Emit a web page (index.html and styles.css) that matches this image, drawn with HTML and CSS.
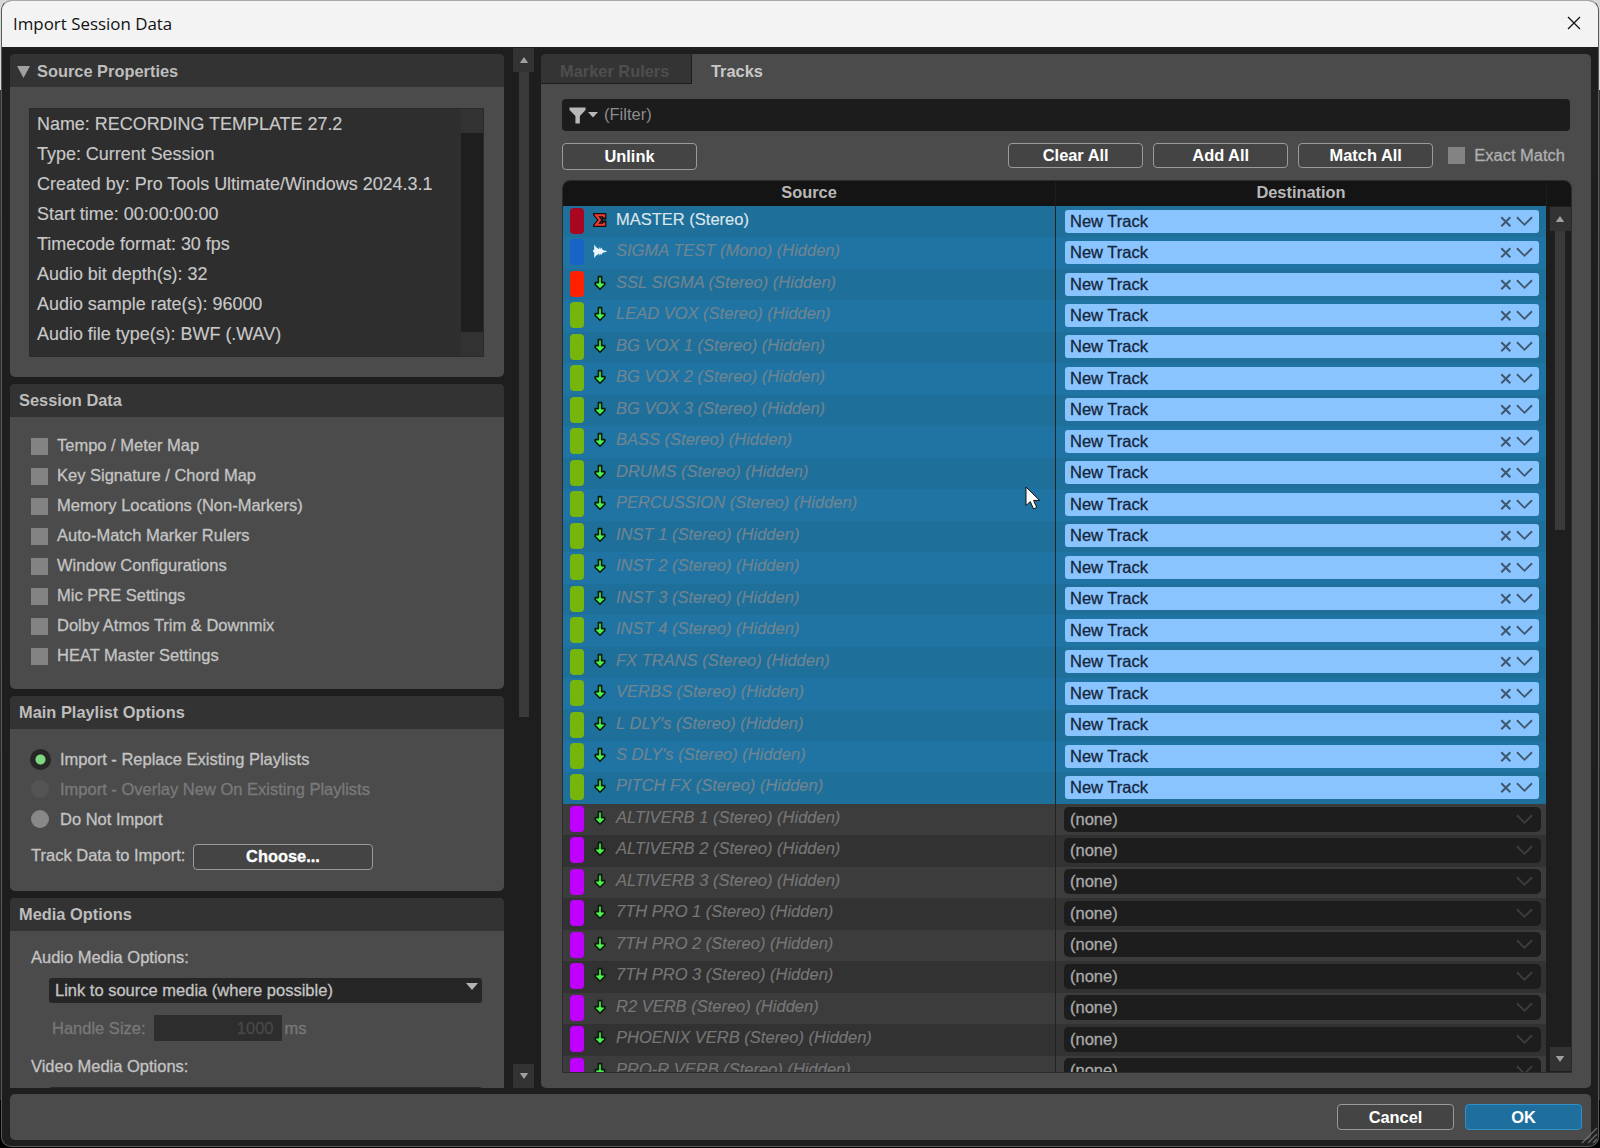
FILE: index.html
```html
<!DOCTYPE html>
<html lang="en">
<head>
  <meta charset="UTF-8" />
  <meta name="viewport" content="width=device-width, initial-scale=1.0"/>
  <title>Import Session Data</title>
  <link rel="stylesheet" href="styles.css">
</head>
<body>

  <!-- Shared icons -->
  <svg class="hidden">
    <symbol id="icon-arrow" viewBox="0 0 14 16">
      <path d="M5.4 1.6h3.2v6h3.2v1.9L7 14.2 2.2 9.5V7.6h3.2z" fill="#4df04d" stroke="#0b1a0b" stroke-width="1.6" stroke-linejoin="round"/>
    </symbol>
    <symbol id="icon-sigma" viewBox="0 0 14 16">
      <path d="M11.2 5.4V3.2H3L7 8l-4 4.8h8.2v-2.2" fill="none" stroke="#1a0b0b" stroke-width="4.4" stroke-linecap="square"/>
      <path d="M11.2 5.4V3.2H3L7 8l-4 4.8h8.2v-2.2" fill="none" stroke="#f03a30" stroke-width="2"/>
    </symbol>
    <symbol id="icon-wave" viewBox="0 0 14 16">
      <path d="M0 7.4l1.2-.8V1.6l2 2.6L5 5.4l1 .8.9-2.4.8 2.4 1-1.6.9 2.4 4.1 1v.8l-4.1 1-.9 2.2-1-1.6-.8 2.4-.9-2.2-1 .8-1.8 1.2-2 2.4V9.6L0 8.8z" fill="#e8f6fa"/>
    </symbol>
    <symbol id="icon-x" viewBox="0 0 12 12">
      <path d="M1.3 1.3l9 9M10.3 1.3l-9 9" fill="none" stroke="currentColor" stroke-width="2"/>
    </symbol>
    <symbol id="icon-chevron" viewBox="0 0 18 11">
      <path d="M1 1l8 8 8-8" fill="none" stroke="currentColor" stroke-width="1.9"/>
    </symbol>
    <symbol id="icon-up" viewBox="0 0 10 8">
      <path d="M5 1l4.2 6H.8z" fill="currentColor"/>
    </symbol>
    <symbol id="icon-down" viewBox="0 0 10 8">
      <path d="M.8 1h8.4L5 7z" fill="currentColor"/>
    </symbol>
  </svg>

  <div class="window">

    <div class="titlebar">
      <span class="title">Import Session Data</span>
      <svg class="close" viewBox="0 0 14 14"><path d="M1 1l12 12M13 1L1 13" fill="none" stroke="#111" stroke-width="1.3"/></svg>
    </div>

    <div class="content">

      <!-- Left side -->
      <div class="sidebar">

        <section class="panel source">
          <h2><svg class="disclosure" viewBox="0 0 13 12"><path d="M0 0h13L6.5 12z" fill="#a0a0a0"/></svg>Source Properties</h2>
          <div class="properties">
            <ul>
              <li>Name: RECORDING TEMPLATE 27.2</li>
              <li>Type: Current Session</li>
              <li>Created by: Pro Tools Ultimate/Windows 2024.3.1</li>
              <li>Start time: 00:00:00:00</li>
              <li>Timecode format: 30 fps</li>
              <li>Audio bit depth(s): 32</li>
              <li>Audio sample rate(s): 96000</li>
              <li>Audio file type(s): BWF (.WAV)</li>
            </ul>
            <div class="mini-scroll"><span></span><span></span></div>
          </div>
        </section>

        <section class="panel session">
          <h2>Session Data</h2>
          <div class="options">
            <label><i class="check"></i>Tempo / Meter Map</label>
            <label><i class="check"></i>Key Signature / Chord Map</label>
            <label><i class="check"></i>Memory Locations (Non-Markers)</label>
            <label><i class="check"></i>Auto-Match Marker Rulers</label>
            <label><i class="check"></i>Window Configurations</label>
            <label><i class="check"></i>Mic PRE Settings</label>
            <label><i class="check"></i>Dolby Atmos Trim &amp; Downmix</label>
            <label><i class="check"></i>HEAT Master Settings</label>
          </div>
        </section>

        <section class="panel playlist">
          <h2>Main Playlist Options</h2>
          <div class="options radios">
            <label><i class="radio selected"></i>Import - Replace Existing Playlists</label>
            <label class="disabled"><i class="radio"></i>Import - Overlay New On Existing Playlists</label>
            <label><i class="radio"></i>Do Not Import</label>
          </div>
          <div class="track-data">
            <span>Track Data to Import:</span>
            <button class="btn choose">Choose...</button>
          </div>
        </section>

        <section class="panel media">
          <h2>Media Options</h2>
          <div class="media-label">Audio Media Options:</div>
          <div class="select">
            <span>Link to source media (where possible)</span>
            <svg viewBox="0 0 12 7"><path d="M0 0h12L6 7z" fill="#b4b4b4"/></svg>
          </div>
          <div class="handle">
            <span>Handle Size:</span>
            <span class="handle-value">1000</span>
            <span>ms</span>
          </div>
          <div class="media-label">Video Media Options:</div>
          <div class="select"></div>
        </section>

      </div>

      <div class="scrollbar side-scroll">
        <span class="scroll-btn"><svg><use href="#icon-up"/></svg></span>
        <span class="thumb"></span>
        <span class="scroll-btn last"><svg><use href="#icon-down"/></svg></span>
      </div>

      <!-- Right side -->
      <div class="main">
        <div class="tabs">
          <div class="tab inactive">Marker Rulers</div>
          <div class="tab">Tracks</div>
        </div>

        <div class="filter">
          <svg class="funnel" viewBox="0 0 18 18"><path d="M.5.5h17v2.6l-6 6.4v8H6.8v-8L.5 3.1z" fill="#b8b8b8"/></svg>
          <svg class="funnel-arrow" viewBox="0 0 10 6"><path d="M0 0h10L5 5.6z" fill="#b8b8b8"/></svg>
          <span>(Filter)</span>
        </div>

        <div class="toolbar">
          <button class="btn unlink">Unlink</button>
          <button class="btn">Clear All</button>
          <button class="btn">Add All</button>
          <button class="btn">Match All</button>
          <label class="exact"><i class="check"></i><span>Exact Match</span></label>
        </div>

        <div class="table">
          <div class="table-head">
            <span>Source</span>
            <span>Destination</span>
          </div>
          <div class="table-body">
            <div class="rows" id="rows"></div>
            <div class="scrollbar table-scroll">
              <span class="scroll-btn"><svg><use href="#icon-up"/></svg></span>
              <span class="thumb"></span>
              <span class="scroll-btn last"><svg><use href="#icon-down"/></svg></span>
            </div>
          </div>
        </div>
      </div>
    </div>

    <div class="footer">
      <button class="btn">Cancel</button>
      <button class="btn ok">OK</button>
    </div>

    <svg class="grip" viewBox="0 0 18 18"><path d="M2 17L17 2M8 17l9-9M13 17l4-4" stroke="#6a6a6a" stroke-width="1.4"/></svg>
  </div>

  <svg class="cursor" viewBox="0 0 16 24"><path d="M1 1v18.6l4.3-4 3.2 7.3 3.2-1.5-3.1-7h6z" fill="#fff" stroke="#111" stroke-width="1"/></svg>

  <script>
    const tracks = [
      ["MASTER (Stereo)", "#a90620", "sigma"],
      ["SIGMA TEST (Mono) (Hidden)", "#1763c8", "wave"],
      ["SSL SIGMA (Stereo) (Hidden)", "#ff2000", "arrow"],
      ["LEAD VOX (Stereo) (Hidden)", "#76b50c", "arrow"],
      ["BG VOX 1 (Stereo) (Hidden)", "#76b50c", "arrow"],
      ["BG VOX 2 (Stereo) (Hidden)", "#76b50c", "arrow"],
      ["BG VOX 3 (Stereo) (Hidden)", "#76b50c", "arrow"],
      ["BASS (Stereo) (Hidden)", "#76b50c", "arrow"],
      ["DRUMS (Stereo) (Hidden)", "#76b50c", "arrow"],
      ["PERCUSSION (Stereo) (Hidden)", "#76b50c", "arrow"],
      ["INST 1 (Stereo) (Hidden)", "#76b50c", "arrow"],
      ["INST 2 (Stereo) (Hidden)", "#76b50c", "arrow"],
      ["INST 3 (Stereo) (Hidden)", "#76b50c", "arrow"],
      ["INST 4 (Stereo) (Hidden)", "#76b50c", "arrow"],
      ["FX TRANS (Stereo) (Hidden)", "#76b50c", "arrow"],
      ["VERBS (Stereo) (Hidden)", "#76b50c", "arrow"],
      ["L DLY's (Stereo) (Hidden)", "#76b50c", "arrow"],
      ["S DLY's (Stereo) (Hidden)", "#76b50c", "arrow"],
      ["PITCH FX (Stereo) (Hidden)", "#76b50c", "arrow"],
      ["ALTIVERB 1 (Stereo) (Hidden)", "#bf00ff", "arrow"],
      ["ALTIVERB 2 (Stereo) (Hidden)", "#bf00ff", "arrow"],
      ["ALTIVERB 3 (Stereo) (Hidden)", "#bf00ff", "arrow"],
      ["7TH PRO 1 (Stereo) (Hidden)", "#bf00ff", "arrow"],
      ["7TH PRO 2 (Stereo) (Hidden)", "#bf00ff", "arrow"],
      ["7TH PRO 3 (Stereo) (Hidden)", "#bf00ff", "arrow"],
      ["R2 VERB (Stereo) (Hidden)", "#bf00ff", "arrow"],
      ["PHOENIX VERB (Stereo) (Hidden)", "#bf00ff", "arrow"],
      ["PRO-R VERB (Stereo) (Hidden)", "#bf00ff", "arrow"]
    ];
    const selectedCount = 19;

    document.getElementById("rows").innerHTML = tracks.map(([name, color, icon], i) => {
      const selected = i < selectedCount;
      const hidden = name.includes("(Hidden)");
      return `
        <div class="row ${selected ? "selected" : ""}">
          <div class="cell-source">
            <span class="swatch" style="background:${color}"></span>
            <svg class="track-icon"><use href="#icon-${icon}"/></svg>
            <span class="track-name ${hidden ? "is-hidden" : ""}">${name}</span>
          </div>
          <div class="cell-dest">
            <div class="dest">
              <span>${selected ? "New Track" : "(none)"}</span>
              ${selected ? '<svg class="dest-x"><use href="#icon-x"/></svg>' : ""}
              <svg class="dest-chevron"><use href="#icon-chevron"/></svg>
            </div>
          </div>
        </div>`;
    }).join("");
  </script>

</body>
</html>
```
FILE: styles.css
```css
* {
  box-sizing: border-box;
}

body {
  margin: 0;
  height: 100vh;
  background: linear-gradient(#d8d8d8 0, #d8d8d8 90px, #333 90px, #222 1100px, #000 1100px);
  font-family: "Liberation Sans", Arial, sans-serif;
  font-size: 16.5px;
  line-height: 20px;
  color: #c4c4c4;
  overflow: hidden;
}

.hidden {
  display: none;
}

.window {
  position: relative;
  width: 1598px;
  height: 1147px;
  margin: 0 1px;
  display: flex;
  flex-direction: column;
  background: #1e1e1e;
  border: 1px solid #5a5a5a;
  border-top: 1px solid #a8a8a8;
  border-radius: 10px;
  overflow: hidden;
}

.titlebar {
  height: 46px;
  flex: none;
  display: flex;
  align-items: center;
  justify-content: space-between;
  padding: 0 17px 0 11px;
  background: #f3f3f3;
}

.title {
  font-family: "Open Sans", "Noto Sans", sans-serif;
  font-size: 16.9px;
  color: #111;
}

.close {
  width: 14px;
  height: 14px;
  margin-bottom: 2px;
}

.content {
  display: flex;
  height: 1041px;
  flex: none;
}

/* Left side */

.sidebar {
  width: 494px;
  margin: 7px 0 0 8px;
  display: flex;
  flex-direction: column;
  gap: 7px;
  overflow: hidden;
}

.panel {
  flex: none;
  background: #4b4b4b;
  border-radius: 5px;
  overflow: hidden;
  -webkit-text-stroke: 0.3px;
}

.panel h2 {
  margin: 0;
  height: 33px;
  padding: 5px 9px 7px;
  display: flex;
  align-items: center;
  background: #333;
  font-size: 16.4px;
  line-height: 20px;
  color: #bdbdbd;
  -webkit-text-stroke: 0;
}

.source {
  height: 323px;
}

.source h2 {
  padding: 6px 10px;
}

.panel .disclosure {
  width: 13px;
  height: 12px;
  margin: 2px 7px 0 -3px;
}

.properties {
  display: flex;
  justify-content: space-between;
  margin: 21px 20px 0 19px;
  height: 249px;
  background: #2e2e2e;
  border: 1px solid #2a2a2a;
}

.properties ul {
  margin: 0;
  padding: 0 0 0 7px;
  list-style: none;
  font-size: 17.95px;
  line-height: 30px;
  color: #c8c8c8;
  white-space: nowrap;
  -webkit-text-stroke: 0.15px;
}

.mini-scroll {
  width: 22px;
  display: flex;
  flex-direction: column;
  justify-content: space-between;
  background: #1e1e1e;
}

.mini-scroll span {
  height: 24px;
  background: #323232;
}

.session {
  height: 305px;
}

.options {
  padding: 15px 0 0 21px;
}

.session .options {
  padding-top: 13px;
}

.options label {
  display: flex;
  align-items: center;
  height: 30px;
}

.check {
  width: 17px;
  height: 17px;
  flex: none;
  margin-right: 9px;
  background: #838383;
}

.options .check {
  margin-top: 2px;
}

.playlist {
  height: 195px;
}

.radio {
  width: 18px;
  height: 18px;
  margin-right: 11px;
  border-radius: 50%;
  background: #888;
}

.radio.selected {
  width: 21px;
  height: 21px;
  margin: 0 9px 0 -1px;
  background: radial-gradient(circle, #7fd67f 4.5px, #262626 5.5px);
}

.disabled {
  color: #7a7a7a;
}

.disabled .radio {
  background: #545454;
}

.track-data {
  display: flex;
  align-items: center;
  padding-left: 21px;
  margin-top: 10px;
}

.track-data span {
  width: 162px;
  margin-bottom: 5px;
}

.btn {
  width: 135px;
  height: 25px;
  padding: 0 0 1px;
  background: #444;
  border: 1.5px solid #9a9a9a;
  border-radius: 4px;
  color: #fff;
  font-family: inherit;
  font-size: 16.4px;
  font-weight: bold;
  line-height: 20px;
}

.btn.choose {
  width: 180px;
  height: 26px;
  padding: 0 0 2px;
}

.media {
  height: 230px;
}

.media-label {
  padding: 16px 21px 0;
}

.select {
  display: flex;
  justify-content: space-between;
  height: 25px;
  margin: 11px 22px 0 39px;
  padding: 2px 4px 0 6px;
  background: #262626;
  border-radius: 3px;
}

.select svg {
  width: 12px;
  height: 7px;
  margin-top: 3px;
}

.handle {
  display: flex;
  align-items: center;
  margin: 12px 0 0 42px;
  color: #787878;
}

.handle-value {
  width: 128px;
  height: 26px;
  margin: 0 3px 0 8px;
  padding: 3px 8px;
  background: #2d2d2d;
  color: #484848;
  text-align: right;
}

.handle + .media-label {
  padding-top: 15px;
}

/* Scrollbars */

.scrollbar {
  display: flex;
  flex-direction: column;
  align-items: center;
  color: #a0a0a0;
}

.scroll-btn {
  width: 21px;
  height: 24px;
  display: flex;
  align-items: center;
  justify-content: center;
  background: #333;
}

.scroll-btn svg {
  width: 10px;
  height: 8px;
}

.scroll-btn.last {
  margin-top: auto;
}

.thumb {
  width: 10px;
  background: #3a3a3a;
}

.side-scroll {
  width: 21px;
  margin: 1px 7px 0 9px;
}

.side-scroll .thumb {
  height: 645px;
}

/* Right side */

.main {
  width: 1050px;
  margin-top: 7px;
  display: flex;
  flex-direction: column;
  background: #4b4b4b;
  border-radius: 5px;
  overflow: hidden;
}

.tabs {
  display: flex;
  height: 30px;
  flex: none;
}

.tab {
  padding: 7px 19px 0;
  font-size: 16.4px;
  font-weight: bold;
  line-height: 20px;
  color: #c8c8c8;
}

.tab.inactive {
  width: 151px;
  background: #343434;
  border-right: 1px solid #1c1c1c;
  border-bottom: 1px solid #1c1c1c;
  color: #4e4e4e;
}

.filter {
  display: flex;
  align-items: center;
  height: 32px;
  margin: 15px 21px 0;
  padding: 0 7px;
  background: #1c1c1c;
  border-radius: 4px;
  color: #8c8c8c;
}

.filter span {
  margin-bottom: 3px;
}

.funnel {
  width: 17px;
  height: 17px;
  margin-right: 2px;
}

.funnel-arrow {
  width: 10px;
  height: 6px;
  margin-right: 6px;
}

.toolbar {
  display: flex;
  gap: 10px;
  margin: 12px 26px 0 21px;
}

.btn.unlink {
  height: 27px;
  margin-right: auto;
  padding: 0 0 2px;
}

.exact {
  display: flex;
  align-items: center;
  height: 25px;
  margin-left: 5px;
  color: #b0b0b0;
  -webkit-text-stroke: 0.3px;
}

.exact span {
  margin-bottom: 2px;
}

.table {
  width: 1010px;
  height: 893px;
  margin: 10px 0 0 21px;
  border: 1px solid #2c2c2c;
  border-radius: 8px 8px 0 0;
  overflow: hidden;
}

.table-head {
  display: grid;
  grid-template-columns: 493px 491px;
  height: 25px;
  padding-top: 1px;
  background: #141414;
  font-size: 16.4px;
  font-weight: bold;
  text-align: center;
  color: #b8b8b8;
}

.table-head span {
  height: 24px;
  border-right: 1px solid #1e1e1e;
}

.table-body {
  display: flex;
  height: 866px;
  background: #1e1e1e;
}

.rows {
  width: 983px;
}

.row {
  display: grid;
  grid-template-columns: 493px 490px;
  height: 31.476px;
  background: #3c3c3c;
}

.row:nth-child(odd) {
  background: #323232;
}

.row:nth-child(even) {
  background: #3c3c3c;
}

.row.selected {
  background: #2074a3;
}

.row.selected:nth-child(odd) {
  background: #1f6f9b;
}

.cell-source {
  display: flex;
  align-items: flex-start;
  padding: 2px 0 0 7px;
  border-right: 1px solid #222;
}

.swatch {
  width: 14px;
  height: 26px;
  margin-right: 9px;
  border-radius: 4px;
}

.track-icon {
  width: 14px;
  height: 16px;
  margin: 4px 9px 0 0;
}

.track-name {
  margin-top: 1px;
  color: #dce6ea;
  -webkit-text-stroke: 0.15px;
}

.is-hidden {
  color: #767676;
  font-style: italic;
}

.selected .is-hidden {
  color: #6f8591;
}

.cell-dest {
  padding: 2.6px 5px 0 8px;
}

.dest {
  display: flex;
  align-items: flex-start;
  height: 25px;
  padding: 2px 8px 0 6px;
  border-radius: 5px;
  background: #1d1d1d;
  color: #aaa;
  -webkit-text-stroke: 0.3px;
}

.dest span {
  margin-right: auto;
}

.dest-x {
  width: 12px;
  height: 12px;
  margin: 5px 4px 0 0;
  color: #3e566e;
}

.dest-chevron {
  width: 17px;
  height: 11px;
  margin-top: 5px;
  color: #3e3e3e;
}

.selected .dest {
  height: 23px;
  margin: 1px 2px 0 1px;
  padding: 1px 6px 0 5px;
  border-radius: 3px;
  background: #8ac4ff;
  color: #14263a;
}

.selected .dest-chevron {
  color: #3e566e;
}

.table-scroll {
  width: 22px;
  margin: 1px 0 1px auto;
}

.table-scroll .thumb {
  height: 299px;
}

/* Footer */

.footer {
  display: flex;
  justify-content: flex-end;
  gap: 11px;
  flex: none;
  width: 1581px;
  height: 46px;
  margin: 6px 0 0 8px;
  padding: 10px 9px 0;
  background: #4b4b4b;
  border-radius: 5px;
}

.footer .btn {
  width: 117px;
  height: 26px;
}

.footer .btn.ok {
  background: #1f6f9e;
  border-color: #2f8fc6;
}

.grip {
  position: absolute;
  right: 0;
  bottom: 2px;
  width: 18px;
  height: 18px;
}

.cursor {
  position: absolute;
  left: 1025px;
  top: 486px;
  width: 16px;
  height: 24px;
}
```
